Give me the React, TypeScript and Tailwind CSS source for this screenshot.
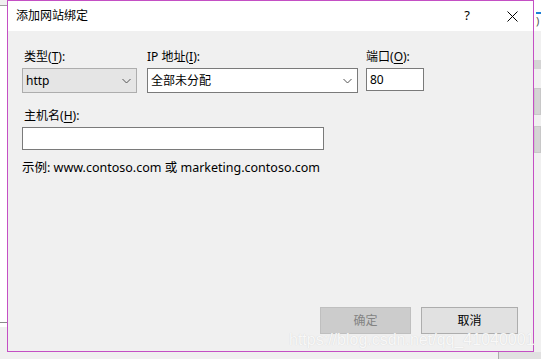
import React from 'react'

const font = '[font-family:"Segoe_UI","Noto_Sans","Noto_Sans_CJK_SC",sans-serif]'

function Chevron() {
  return (
    <svg width="9" height="6" viewBox="0 0 9 6" className="shrink-0">
      <path d="M0.5 1 L4.5 5 L8.5 1" fill="none" stroke="#555" strokeWidth="1" />
    </svg>
  )
}

function Label({ text, keyChar, rest }: { text: string; keyChar: string; rest: string }) {
  return (
    <div className="h-[16px] leading-[16px] text-[12px] text-black">
      {text}(<span className="underline underline-offset-2">{keyChar}</span>){rest}
    </div>
  )
}

export default function App() {
  return (
    <div className={`relative w-[541px] h-[359px] overflow-hidden bg-[#f0f0f0] ${font}`}>
      {/* background app, left strip */}
      <div className="absolute left-0 top-0 w-[7px] h-[322px] bg-white border-t border-[#a0a0a0] mt-[5px]" />
      <div className="absolute left-0 top-[322px] w-[7px] h-px bg-[#8a8a8a]" />

      {/* background app, right strip */}
      <div className="absolute left-[534px] top-0 w-[7px] h-[31px] bg-white">
        <div className="mt-[12px] ml-[2px] h-[2px] bg-[#1e7fd6]" />
        <div className="ml-[2px] text-[11px] leading-[14px] text-[#555]">)</div>
      </div>
      <div className="absolute left-[534px] top-[60px] w-[7px] flex flex-col">
        <div className="h-[9px] bg-[#d4d4d4]" />
        <div className="h-[27px] mt-[19px] bg-[#d4d4d4] border border-[#c8c8c8]" />
        <div className="h-[27px] mt-[11px] bg-[#d4d4d4] border border-[#c8c8c8]" />
      </div>
      <div className="absolute left-[498px] top-[352px] w-[43px] h-[20px] overflow-hidden bg-[#e1e1e1] border-l border-[#adadad]">
        <span className="ml-[7px] text-[12px] leading-[14px] text-black whitespace-nowrap">关闭(C)</span>
      </div>

      {/* dialog window */}
      <div className="absolute left-[7px] top-0 w-[527px] h-[352px] border border-[#c44fc4] bg-[#f0f0f0] flex flex-col">
        <div className="h-[30px] bg-white flex items-center shrink-0">
          <span className="ml-[8px] text-[12px] text-black">添加网站绑定</span>
          <span className="ml-auto mr-[37px] text-[13px] text-black">?</span>
          <svg width="11" height="11" viewBox="0 0 11 11" className="mr-[15px]">
            <path d="M0.5 0.5 L10.5 10.5 M10.5 0.5 L0.5 10.5" stroke="#000" strokeWidth="1" />
          </svg>
        </div>

        <div className="flex-1 flex flex-col pl-[14px] pr-[14px]">
          <div className="flex mt-[18px]">
            <div className="w-[115px] flex flex-col">
              <div className="pl-[2px]"><Label text="类型" keyChar="T" rest=":" /></div>
              <div className="mt-[3px] h-[25px] bg-[#e5e5e5] border border-[#adadad] flex items-center pl-[3px] pr-[5px]">
                <span className="text-[12px] text-black">http</span>
                <span className="ml-auto"><Chevron /></span>
              </div>
            </div>
            <div className="w-[211px] ml-[10px] flex flex-col">
              <Label text="IP 地址" keyChar="I" rest=":" />
              <div className="mt-[3px] h-[25px] bg-white border border-[#7a7a7a] flex items-center pl-[3px] pr-[5px]">
                <span className="text-[12px] text-black">全部未分配</span>
                <span className="ml-auto"><Chevron /></span>
              </div>
            </div>
            <div className="w-[58px] ml-[8px] flex flex-col">
              <Label text="端口" keyChar="O" rest=":" />
              <div className="mt-[3px] h-[23px] bg-white border border-[#7a7a7a] flex items-center pl-[3px]">
                <span className="text-[12px] text-black">80</span>
              </div>
            </div>
          </div>

          <div className="mt-[15px] pl-[2px]"><Label text="主机名" keyChar="H" rest=":" /></div>
          <div className="mt-[3px] w-[302px] h-[23px] bg-white border border-[#7a7a7a]" />
          <div className="mt-[10px] text-[12.5px] leading-[16px] text-black">
            示例: www.contoso.com 或 marketing.contoso.com
          </div>

          <div className="mt-auto mb-[17px] flex justify-end">
            <div className="w-[91px] h-[27px] bg-[#cccccc] border border-[#bfbfbf] flex items-center justify-center text-[12px] text-[#838383]">
              确定
            </div>
            <div className="ml-[10px] mr-[1px] w-[97px] h-[27px] bg-[#e1e1e1] border border-[#adadad] flex items-center justify-center text-[12px] text-black">
              取消
            </div>
          </div>
        </div>
      </div>

      {/* watermark */}
      <div className="absolute left-[289px] top-[332px] text-[16px] leading-[15px] text-[#f8f8f8] whitespace-nowrap [font-family:'Liberation_Sans',sans-serif] [text-shadow:0_0_1px_#cfcfcf]">
        https://blog.csdn.net/qq_41040001
      </div>
    </div>
  )
}
